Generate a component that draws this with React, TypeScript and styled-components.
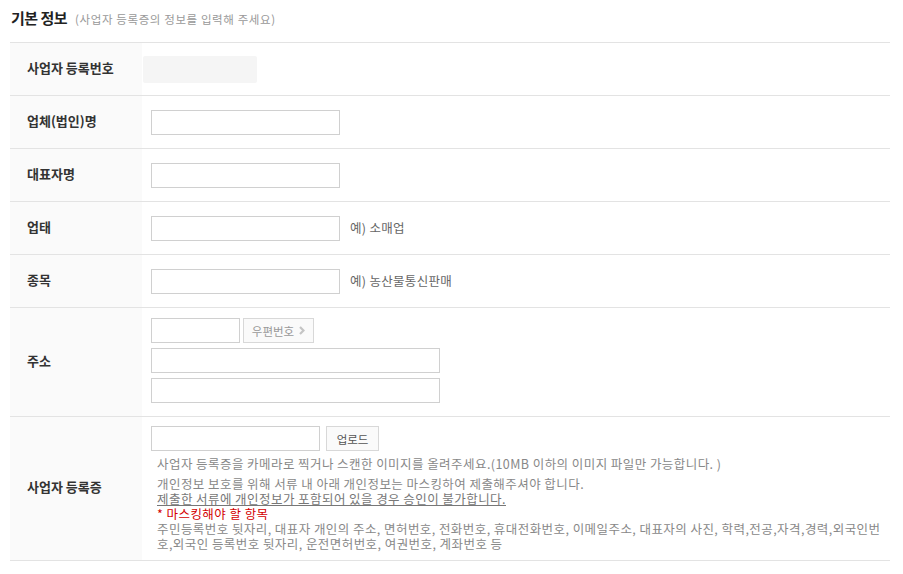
import React from "react";
import styled, { createGlobalStyle } from "styled-components";

const Global = createGlobalStyle`
  html, body { margin: 0; padding: 0; background: #fff; }
  body {
    font-family: "Noto Sans CJK KR", "Noto Sans", sans-serif;
    color: #333;
  }
  * { box-sizing: border-box; }
`;

const Page = styled.div`
  padding: 0 13px 0 10px;
  width: 903px;
`;

const Header = styled.div`
  height: 42px;
  padding: 6px 0 0 1px;
  display: flex;
  align-items: baseline;
  gap: 8px;
`;

const Title = styled.h2`
  margin: 0;
  font-size: 15px;
  line-height: 24px;
  font-weight: 700;
  letter-spacing: -0.5px;
  color: #222;
`;

const Sub = styled.span`
  font-size: 11.5px;
  color: #999;
  letter-spacing: 0.6px;
`;

const Table = styled.div`
  border-top: 1px solid #e3e3e3;
`;

const Row = styled.div`
  display: flex;
  border-bottom: 1px solid #e3e3e3;
`;

const Label = styled.div`
  width: 132px;
  flex: none;
  background: #fafafa;
  padding-left: 17px;
  padding-bottom: 4px;
  display: flex;
  align-items: center;
  font-size: 13px;
  font-weight: 700;
  color: #333;
`;

const Field = styled.div<{ $pt?: number; $pb?: number; $col?: boolean }>`
  flex: 1;
  min-height: 52px;
  padding: ${(p) => p.$pt ?? 0}px 8px ${(p) => p.$pb ?? 0}px 9px;
  display: flex;
  flex-direction: ${(p) => (p.$col ? "column" : "row")};
  align-items: ${(p) => (p.$col ? "flex-start" : "center")};
  gap: ${(p) => (p.$col ? 5 : 0)}px;
`;

const Line = styled.div<{ $gap?: number }>`
  display: flex;
  align-items: center;
  gap: ${(p) => p.$gap ?? 10}px;
`;

const ReadOnlyBox = styled.div`
  width: 114px;
  height: 27px;
  margin-left: -8px;
  background: #f5f5f5;
  border-radius: 2px;
`;

const Input = styled.input<{ $w: number }>`
  width: ${(p) => p.$w}px;
  height: 25px;
  border: 1px solid #d0d0d0;
  background: #fff;
  margin: 0;
  padding: 0 4px;
  font: inherit;
  outline: none;
`;

const Hint = styled.span`
  font-size: 12.5px;
  letter-spacing: 0.3px;
  color: #666;
  padding-bottom: 2px;
`;

const Btn = styled.button<{ $w: number; $color: string }>`
  width: ${(p) => p.$w}px;
  height: 25px;
  border: 1px solid #d8d8d8;
  background: #fafafa;
  margin: 0;
  padding: 0;
  font-family: inherit;
  font-size: 11.5px;
  color: ${(p) => p.$color};
  display: flex;
  align-items: center;
  justify-content: center;
  gap: 5px;
  cursor: pointer;
`;

const Desc = styled.div`
  padding-left: 6px;
  font-size: 12.5px;
  line-height: 15px;
  letter-spacing: 0.44px;
  color: #888;
  white-space: nowrap;
`;

const DescLine = styled.div``;

const Under = styled.span`
  text-decoration: underline;
  color: #777;
`;

const Red = styled.div`
  color: #d40000;
`;

const Chevron = () => (
  <svg width="6" height="9" viewBox="0 0 6 9">
    <path d="M1 1 L4.5 4.5 L1 8" fill="none" stroke="#c4c4c4" strokeWidth="2.2" />
  </svg>
);

export default function App() {
  return (
    <Page>
      <Global />
      <Header>
        <Title>기본 정보</Title>
        <Sub>(사업자 등록증의 정보를 입력해 주세요)</Sub>
      </Header>
      <Table>
        <Row>
          <Label>사업자 등록번호</Label>
          <Field>
            <ReadOnlyBox />
          </Field>
        </Row>
        <Row>
          <Label>업체(법인)명</Label>
          <Field>
            <Input $w={189} />
          </Field>
        </Row>
        <Row>
          <Label>대표자명</Label>
          <Field>
            <Input $w={189} />
          </Field>
        </Row>
        <Row>
          <Label>업태</Label>
          <Field>
            <Line>
              <Input $w={189} />
              <Hint>예) 소매업</Hint>
            </Line>
          </Field>
        </Row>
        <Row>
          <Label>종목</Label>
          <Field>
            <Line>
              <Input $w={189} />
              <Hint>예) 농산물통신판매</Hint>
            </Line>
          </Field>
        </Row>
        <Row>
          <Label>주소</Label>
          <Field $col $pt={10} $pb={13}>
            <Line $gap={3}>
              <Input $w={89} />
              <Btn $w={71} $color="#999">
                우편번호 <Chevron />
              </Btn>
            </Line>
            <Input $w={289} />
            <Input $w={289} />
          </Field>
        </Row>
        <Row>
          <Label>사업자 등록증</Label>
          <Field $col $pt={9} $pb={9}>
            <Line $gap={6}>
              <Input $w={169} />
              <Btn $w={53} $color="#555">
                업로드
              </Btn>
            </Line>
            <Desc>
              사업자 등록증을 카메라로 찍거나 스캔한 이미지를 올려주세요.(10MB 이하의 이미지 파일만 가능합니다. )
            </Desc>
            <Desc>
              <DescLine>개인정보 보호를 위해 서류 내 아래 개인정보는 마스킹하여 제출해주셔야 합니다.</DescLine>
              <Under>제출한 서류에 개인정보가 포함되어 있을 경우 승인이 불가합니다.</Under>
              <Red>* 마스킹해야 할 항목</Red>
              <DescLine>
                주민등록번호 뒷자리, 대표자 개인의 주소, 면허번호, 전화번호, 휴대전화번호, 이메일주소, 대표자의 사진, 학력,전공,자격,경력,외국인번
              </DescLine>
              <DescLine>호,외국인 등록번호 뒷자리, 운전면허번호, 여권번호, 계좌번호 등</DescLine>
            </Desc>
          </Field>
        </Row>
      </Table>
    </Page>
  );
}
